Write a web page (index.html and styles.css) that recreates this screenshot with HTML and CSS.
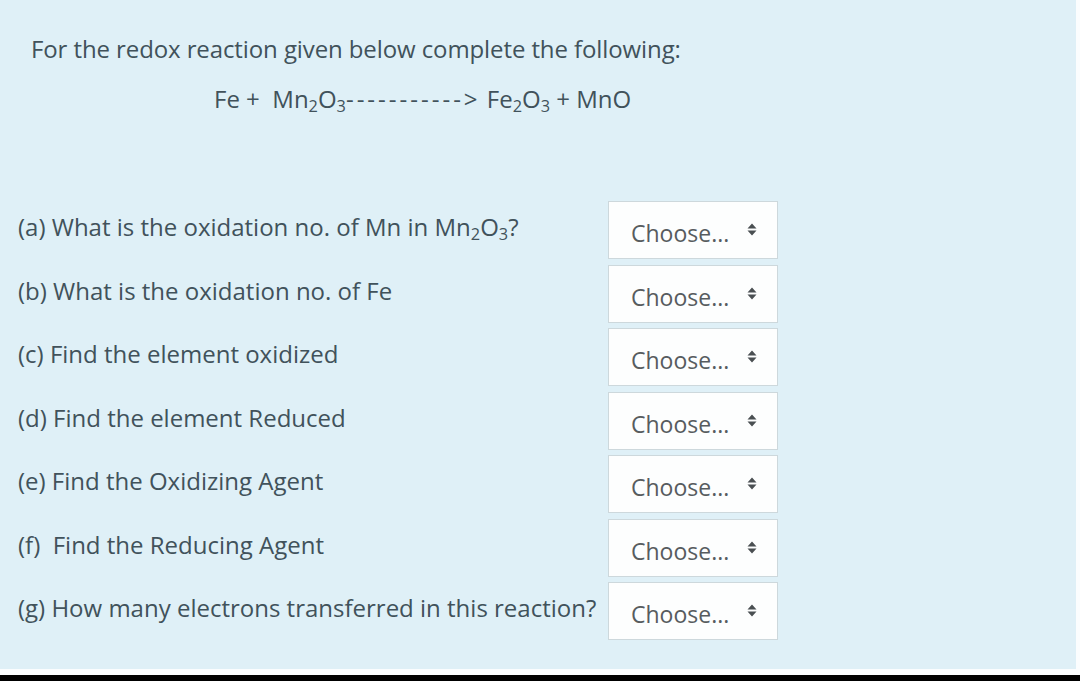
FILE: index.html
```html
<!DOCTYPE html>
<html lang="en">
<head>
<meta charset="utf-8">
<title>Redox reaction question</title>
<link rel="stylesheet" href="styles.css">
</head>
<body>
<div class="page">
  <div class="panel">
    <p class="intro">For the redox reaction given below complete the following:</p>
    <p class="equation">Fe +&nbsp; Mn<sub>2</sub>O<sub>3</sub><span class="dashes">-----------&gt;</span> Fe<sub>2</sub>O<sub>3</sub> + MnO</p>
    <div class="questions">
      <div class="label">(a) What is the oxidation no. of Mn in Mn<sub>2</sub>O<sub>3</sub>?</div>
      <div class="select"><span class="choose">Choose...</span><svg class="arrows" width="10" height="13" viewBox="0 0 10 13"><path d="M0.5 5.5 L5 0.5 L9.5 5.5 Z M0.5 7.5 L5 12.5 L9.5 7.5 Z"/></svg></div>
      <div class="label">(b) What is the oxidation no. of Fe</div>
      <div class="select"><span class="choose">Choose...</span><svg class="arrows" width="10" height="13" viewBox="0 0 10 13"><path d="M0.5 5.5 L5 0.5 L9.5 5.5 Z M0.5 7.5 L5 12.5 L9.5 7.5 Z"/></svg></div>
      <div class="label">(c) Find the element oxidized</div>
      <div class="select"><span class="choose">Choose...</span><svg class="arrows" width="10" height="13" viewBox="0 0 10 13"><path d="M0.5 5.5 L5 0.5 L9.5 5.5 Z M0.5 7.5 L5 12.5 L9.5 7.5 Z"/></svg></div>
      <div class="label">(d) Find the element Reduced</div>
      <div class="select"><span class="choose">Choose...</span><svg class="arrows" width="10" height="13" viewBox="0 0 10 13"><path d="M0.5 5.5 L5 0.5 L9.5 5.5 Z M0.5 7.5 L5 12.5 L9.5 7.5 Z"/></svg></div>
      <div class="label">(e) Find the Oxidizing Agent</div>
      <div class="select"><span class="choose">Choose...</span><svg class="arrows" width="10" height="13" viewBox="0 0 10 13"><path d="M0.5 5.5 L5 0.5 L9.5 5.5 Z M0.5 7.5 L5 12.5 L9.5 7.5 Z"/></svg></div>
      <div class="label">(f)&nbsp; Find the Reducing Agent</div>
      <div class="select"><span class="choose">Choose...</span><svg class="arrows" width="10" height="13" viewBox="0 0 10 13"><path d="M0.5 5.5 L5 0.5 L9.5 5.5 Z M0.5 7.5 L5 12.5 L9.5 7.5 Z"/></svg></div>
      <div class="label">(g) How many electrons transferred in this reaction?</div>
      <div class="select"><span class="choose">Choose...</span><svg class="arrows" width="10" height="13" viewBox="0 0 10 13"><path d="M0.5 5.5 L5 0.5 L9.5 5.5 Z M0.5 7.5 L5 12.5 L9.5 7.5 Z"/></svg></div>
    </div>
  </div>
</div>
</body>
</html>
```

FILE: styles.css
```css
html, body {
  margin: 0;
  padding: 0;
  background: #000;
  height: 681px;
  overflow: hidden;
}

.page {
  width: 1080px;
  height: 675px;
  background: #fbfdfe;
  box-sizing: border-box;
  padding: 0 4px 6px 0;
}

.panel {
  height: 669px;
  background: #dff0f7;
  color: #41525b;
  font-family: "Open Sans", "Noto Sans", sans-serif;
  font-size: 24px;
  box-sizing: border-box;
  padding-top: 35px;
}

.intro {
  margin: 0 0 0 31px;
  line-height: 28px;
  letter-spacing: -0.1px;
}

.equation {
  margin: 22px 0 0 214px;
  line-height: 28px;
  font-size: 24px;
}

.dashes {
  letter-spacing: 3px;
}

sub {
  font-size: 0.68em;
  line-height: 0;
  vertical-align: -0.22em;
}

.questions {
  margin: 88px 0 0 18px;
  display: grid;
  grid-template-columns: 590px 170px;
  grid-auto-rows: 58px;
  row-gap: 5.5px;
}

.label {
  align-self: center;
  line-height: 28px;
  margin-top: -6px;
}

.select {
  box-sizing: border-box;
  height: 58px;
  background: #fdfefe;
  border: 1px solid #cdd8dc;
  display: flex;
  align-items: center;
  padding: 0 0 0 22px;
  color: #575c5f;
  font-size: 23px;
}

.choose {
  margin-top: 6px;
  width: 116px;
  line-height: 28px;
}

.arrows {
  fill: #4a4f52;
  margin-top: -1px;
}
```
